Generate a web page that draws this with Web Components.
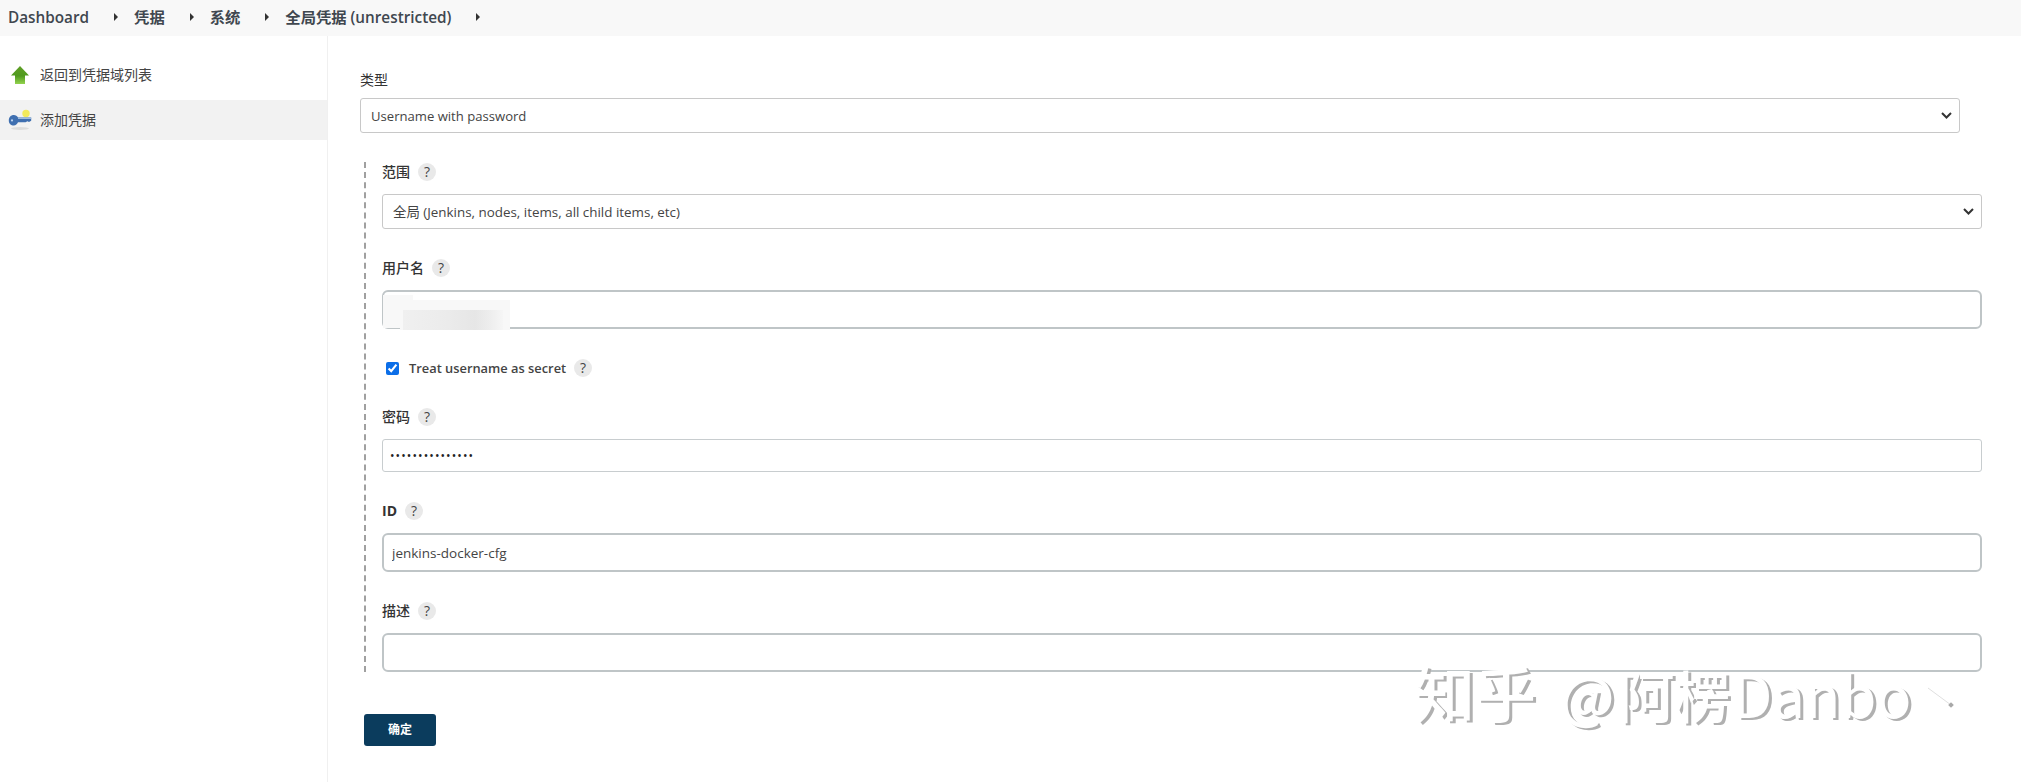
<!DOCTYPE html>
<html lang="zh">
<head>
<meta charset="utf-8">
<title>Jenkins credentials</title>
<style>
  html, body { margin: 0; height: 100%; background: #fff; overflow: hidden; }
  body { font-family: "Open Sans", "Noto Sans CJK SC", sans-serif; color: #333; }
</style>
</head>
<body>
<jk-app>
  <jk-breadcrumbs slot="top">
    <jk-crumb>Dashboard</jk-crumb>
    <jk-crumb>凭据</jk-crumb>
    <jk-crumb>系统</jk-crumb>
    <jk-crumb>全局凭据 (unrestricted)</jk-crumb>
  </jk-breadcrumbs>
  <jk-sidebar slot="side">
    <jk-side-link icon="up">返回到凭据域列表</jk-side-link>
    <jk-side-link icon="key" active>添加凭据</jk-side-link>
  </jk-sidebar>
  <jk-form slot="main">
    <jk-field label="类型" plain>
      <jk-select value="Username with password"></jk-select>
    </jk-field>
    <jk-group>
      <jk-field label="范围" help>
        <jk-select style="--select-size: 13.4px" value="全局 (Jenkins, nodes, items, all child items, etc)"></jk-select>
      </jk-field>
      <jk-field label="用户名" help gap="29">
        <jk-input tall smudge></jk-input>
      </jk-field>
      <jk-check>Treat username as secret</jk-check>
      <jk-field label="密码" help gap="29">
        <jk-input value="•••••••••••••••" dots></jk-input>
      </jk-field>
      <jk-field style="--label-weight: 700" label="ID" help gap="29">
        <jk-input tall value="jenkins-docker-cfg"></jk-input>
      </jk-field>
      <jk-field label="描述" help gap="29">
        <jk-input tall></jk-input>
      </jk-field>
    </jk-group>
    <jk-button>确定</jk-button>
  </jk-form>
  <jk-watermark slot="over">
    <span class="zh">知乎</span><span class="at">@</span><span class="name">阿楞</span><span class="en">Danbo</span>
  </jk-watermark>
</jk-app>

<script>
const CJK = '"Open Sans", "Noto Sans CJK SC", sans-serif';

function define(name, css, html, init) {
  customElements.define(name, class extends HTMLElement {
    connectedCallback() {
      if (this.shadowRoot) return;
      this.attachShadow({ mode: 'open' });
      this.shadowRoot.innerHTML = `<style>${css}</style>${typeof html === 'function' ? html(this) : html}`;
      if (init) init(this);
    }
  });
}

define('jk-app', `
  :host { display: block; height: 782px; position: relative; overflow: hidden; }
  .body { display: grid; grid-template-columns: 328px 1fr; height: 746px; }
`, `
  <slot name="top"></slot>
  <div class="body"><slot name="side"></slot><slot name="main"></slot></div>
  <slot name="over"></slot>
`);

define('jk-breadcrumbs', `
  :host { display: flex; align-items: center; height: 36px; padding: 0 0 2px 8px; background: #f8f8f8; box-sizing: border-box; }
`, `<slot></slot>`);

define('jk-crumb', `
  :host { display: flex; align-items: center; font: 600 15.3px/20px ${CJK}; color: #40474f; }
  .arrow { width: 0; height: 0; margin: 0 16px 0 25px; border-left: 4px solid #333; border-top: 4px solid transparent; border-bottom: 4px solid transparent; }
`, `<slot></slot><span class="arrow"></span>`);

define('jk-sidebar', `
  :host { display: flex; flex-direction: column; gap: 5px; padding-top: 19px; border-right: 1px solid #f0f0f0; box-sizing: border-box; }
`, `<slot></slot>`);

const ICONS = {
  up: `<svg width="22" height="22" viewBox="0 0 22 22">
    <defs><linearGradient id="g" x1="0" y1="0" x2="0" y2="1"><stop offset="0" stop-color="#5f9f26"/><stop offset=".55" stop-color="#4f9a1e"/><stop offset="1" stop-color="#93d34e"/></linearGradient></defs>
    <path d="M11 2 20 11.5H16V20H6V11.5H2Z" fill="url(#g)"/></svg>`,
  key: `<svg width="24" height="24" viewBox="0 0 24 24">
    <ellipse cx="12" cy="20.5" rx="9" ry="1.4" fill="#dcdcdc"/>
    <circle cx="18" cy="5.5" r="3.7" fill="#f3ea5c"/>
    <path d="M.8 12.5C.8 9.2 3 7 5.8 7 7.8 7 9.2 8.2 10 9.6H23.2V12.8L21 14 19.4 13.2 17.6 14.2H10C9.2 16 7.8 17.6 5.8 17.6 3 17.6.8 15.8.8 12.5Z" fill="#3f6fb0"/>
    <path d="M10 9.6H23.2V11H10Z" fill="#9dbbdd"/>
    <circle cx="4" cy="12.4" r="1.1" fill="#bcd3ee"/></svg>`
};

define('jk-side-link', `
  :host { display: flex; align-items: center; height: 40px; padding-left: 8px; font: 400 14px/20px ${CJK}; color: #444; }
  :host([active]) { background: #f2f2f2; }
  .ic { width: 24px; height: 24px; margin-right: 8px; display: flex; align-items: center; justify-content: center; }
`, el => `<span class="ic">${ICONS[el.getAttribute('icon')]}</span><slot></slot>`);

define('jk-form', `
  :host { display: flex; flex-direction: column; padding: 34px 0 0 32px; width: 1600px; }
`, `<slot></slot>`);

define('jk-group', `
  :host { display: flex; flex-direction: column; width: 1600px; margin: 29px 0 0 4px; padding-left: 16px; border-left: 2px dashed #a0a0a0; }
`, `<slot></slot>`);

define('jk-help', `
  :host { display: inline-flex; align-items: center; justify-content: center; width: 18px; height: 18px; border-radius: 50%; background: #e9e9e9; color: #444; font: 400 14px/18px ${CJK}; }
`, `?`);

define('jk-field', `
  :host { display: block; }
  .label { display: flex; align-items: center; gap: 8px; height: 20px; margin-bottom: 12px; font: var(--label-weight, 500) 14px/20px ${CJK}; color: #333; }
  :host([plain]) .label { font-weight: 400; margin-bottom: 8px; }
`, el => `
  <div class="label"><span>${el.getAttribute('label')}</span>${el.hasAttribute('help') ? '<jk-help></jk-help>' : ''}</div>
  <slot></slot>
`, el => { if (el.hasAttribute('gap')) el.style.marginTop = el.getAttribute('gap') + 'px'; });

define('jk-select', `
  :host { display: block; position: relative; height: 35px; }
  select { appearance: none; width: 100%; height: 100%; box-sizing: border-box; padding: 0 32px 0 10px; background: #fff; border: 1px solid #c8c8c8; border-radius: 3px; font: 400 var(--select-size, 13.1px) ${CJK}; color: #444; }
  svg { position: absolute; right: 8px; top: 13px; pointer-events: none; }
`, el => `
  <select><option>${el.getAttribute('value')}</option></select>
  <svg width="11" height="9" viewBox="0 0 11 9"><path d="M1 2 5.5 6.5 10 2" fill="none" stroke="#333" stroke-width="2"/></svg>
`);

define('jk-input', `
  :host { display: block; position: relative; height: 33px; }
  :host([tall]) { height: 39px; }
  input { display: block; width: 100%; height: 100%; box-sizing: border-box; padding: 0 10px; background: #fff; border: 1px solid #c8cdcf; border-radius: 3px; font: 400 13.5px ${CJK}; color: #444; outline: none; }
  :host([tall]) input { border: 2px solid #bfc5c7; border-radius: 6px; padding: 0 8px; }
  :host([dots]) input { font-size: 12px; letter-spacing: 1.1px; padding-left: 7px; color: #222; }
  .smudge { position: absolute; left: 1px; top: 5px; width: 127px; height: 35px;
    background: linear-gradient(90deg, #f0f0f0, #ebebeb 45%, #e6e6e6 72%, #eeeeee 88%, #f6f6f6) no-repeat 20px 15px / 100px 20px, #f8f8f8;
    clip-path: polygon(0 0, 30px 0, 30px 5px, 127px 5px, 127px 35px, 17px 35px, 17px 33px, 0 33px); }
`, el => `
  <input type="text" value="${el.getAttribute('value') || ''}">
  ${el.hasAttribute('smudge') ? '<div class="smudge"></div>' : ''}
`);

define('jk-check', `
  :host { display: flex; align-items: center; gap: 10px; height: 20px; margin: 29px 0 0 4px; font: 600 12.85px/20px ${CJK}; color: #444; }
  input { width: 13px; height: 13px; margin: 0; accent-color: #0b6ee8; }
  .t { display: flex; align-items: center; gap: 8px; }
`, `<input type="checkbox" checked><span class="t"><span><slot></slot></span><jk-help></jk-help></span>`);

define('jk-button', `
  :host { display: inline-flex; align-items: center; justify-content: center; align-self: flex-start; width: 72px; height: 32px; margin: 42px 0 0 4px; background: #0b3c5d; border-radius: 3px; color: #fff; font: 700 12px/32px ${CJK}; }
`, `<slot></slot>`);

define('jk-watermark', `
  :host { position: absolute; left: 1414px; top: 656px; display: flex; align-items: baseline; font: 500 61px/72px "Noto Sans CJK SC", "Open Sans", sans-serif; color: #fff; text-shadow: 3px 2px 0 #b0b0b0; white-space: nowrap; pointer-events: none; }
  ::slotted(.at) { font-size: 56px; margin-left: 24px; }
  ::slotted(.name) { font-size: 56px; margin-left: 4px; }
  ::slotted(.en) { font-size: 58px; margin-left: 2px; font-weight: 400; }
  .dot { position: absolute; left: 510px; top: 28px; }
`, `<slot></slot>
  <svg class="dot" width="32" height="26" viewBox="0 0 32 26"><path d="M4 4 27 21" stroke="#e0e0e0" stroke-width="1" fill="none"/><rect x="25" y="19" width="4" height="4" transform="rotate(45 27 21)" fill="#a8a8a8"/></svg>`);
</script>
</body>
</html>
